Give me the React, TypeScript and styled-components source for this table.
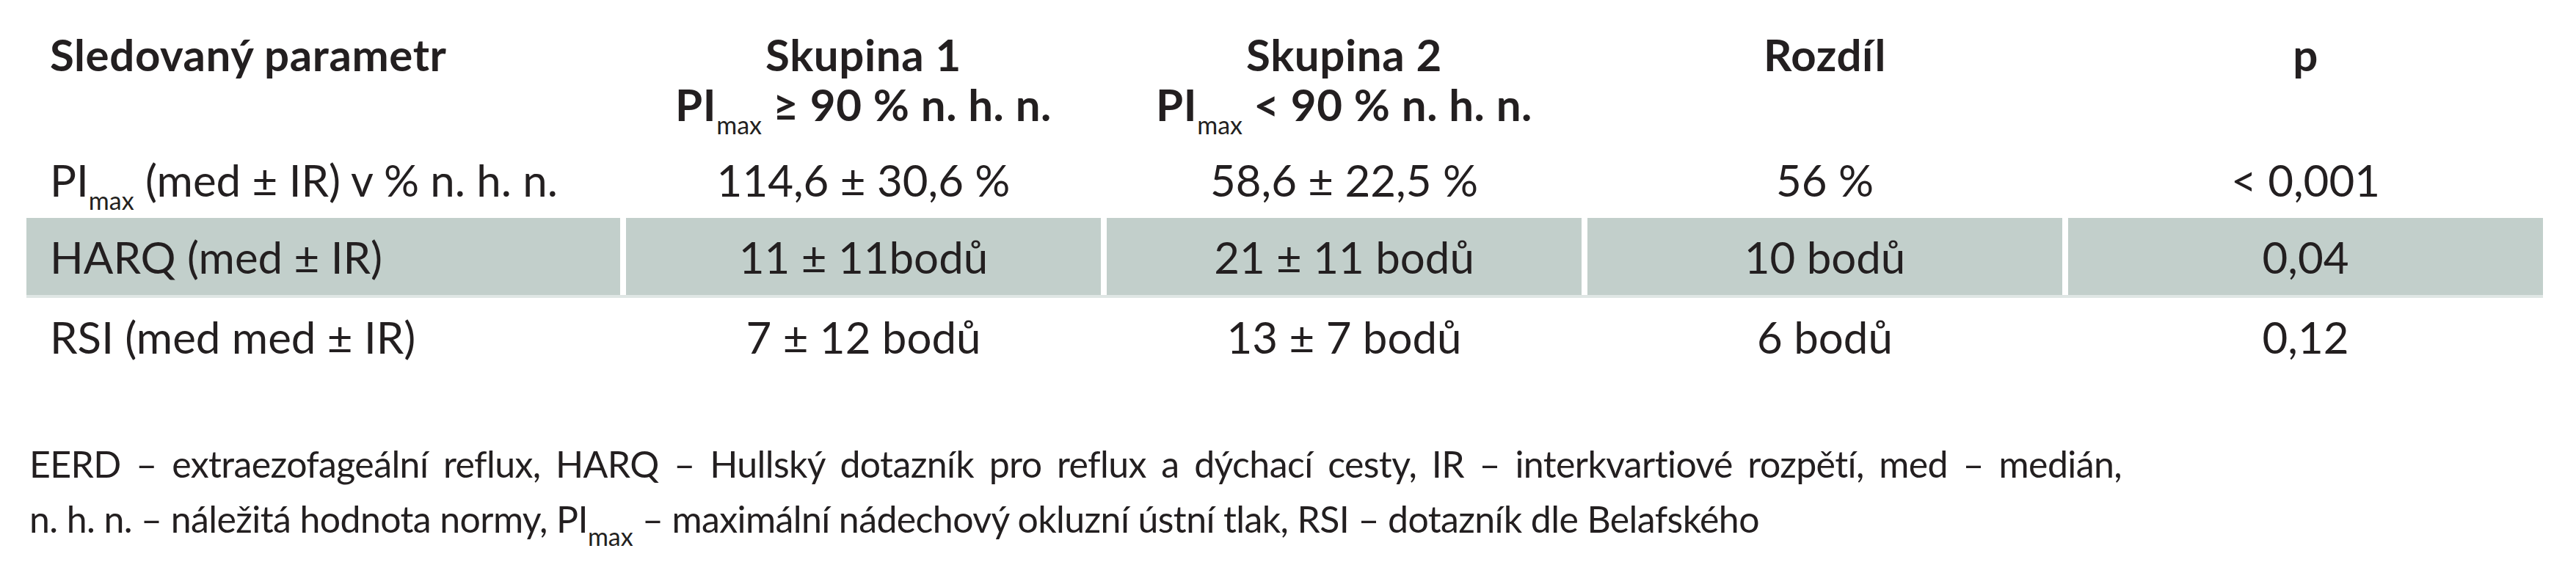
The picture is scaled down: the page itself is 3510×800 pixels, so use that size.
import styled, { createGlobalStyle } from "styled-components";

const GlobalStyle = createGlobalStyle`
  html, body {
    margin: 0;
    padding: 0;
    background: #ffffff;
  }
  body {
    font-family: Lato, "Liberation Sans", sans-serif;
    color: #231f20;
  }
`;

const Page = styled.div`
  width: 3510px;
  height: 800px;
  overflow: hidden;
  padding: 0 0 0 36px;
  box-sizing: border-box;
  background: #fff;
`;

const Table = styled.div`
  width: 3429px;
  display: flex;
  flex-direction: column;
`;

const Row = styled.div<{ $shaded?: boolean; $head?: boolean }>`
  display: grid;
  grid-template-columns: 809px repeat(4, 1fr);
  column-gap: 8px;
  height: ${(p) => (p.$head ? "192px" : "105px")};
  ${(p) => p.$shaded && "border-bottom: 4px solid #dfe6e4;"}
`;

const Cell = styled.div<{ $left?: boolean; $shaded?: boolean; $head?: boolean }>`
  display: flex;
  flex-direction: column;
  align-items: ${(p) => (p.$left ? "flex-start" : "center")};
  justify-content: ${(p) => (p.$head ? "flex-start" : "center")};
  padding-top: ${(p) => (p.$head ? "40px" : "0")};
  padding-left: ${(p) => (p.$left ? "32px" : "0")};
  font-size: 60px;
  line-height: ${(p) => (p.$head ? "68px" : "72px")};
  font-weight: ${(p) => (p.$head ? 700 : 400)};
  letter-spacing: ${(p) => (p.$head ? "0.6px" : "0")};
  background: ${(p) => (p.$shaded ? "#c2cfcb" : "transparent")};
  white-space: nowrap;
`;

const Sub = styled.sub`
  font-size: 34px;
  line-height: 0;
  vertical-align: -18px;
  font-weight: 400;
  letter-spacing: 0;
`;

const Note = styled.div`
  margin: 84px 0 0 4px;
  font-size: 50px;
  line-height: 75px;
  letter-spacing: -0.6px;
`;

const NoteLine = styled.div<{ $full?: boolean }>`
  width: ${(p) => (p.$full ? "2851px" : "auto")};
  text-align: ${(p) => (p.$full ? "justify" : "left")};
  text-align-last: ${(p) => (p.$full ? "justify" : "left")};
  white-space: ${(p) => (p.$full ? "normal" : "nowrap")};
`;

type RowData = { label: React.ReactNode; cells: string[]; shaded?: boolean };

const PI = () => (
  <>
    PI<Sub>max</Sub>
  </>
);

const rows: RowData[] = [
  {
    label: (
      <span>
        <PI /> (med ± IR) v % n. h. n.
      </span>
    ),
    cells: ["114,6 ± 30,6 %", "58,6 ± 22,5 %", "56 %", "< 0,001"],
  },
  {
    label: <span>HARQ (med ± IR)</span>,
    cells: ["11 ± 11bodů", "21 ± 11 bodů", "10 bodů", "0,04"],
    shaded: true,
  },
  {
    label: <span>RSI (med med ± IR)</span>,
    cells: ["7 ± 12 bodů", "13 ± 7 bodů", "6 bodů", "0,12"],
  },
];

export default function App() {
  return (
    <>
      <GlobalStyle />
      <Page>
        <Table>
          <Row $head>
            <Cell $head $left>
              <span>Sledovaný parametr</span>
            </Cell>
            <Cell $head>
              <span>Skupina 1</span>
              <span>
                <PI /> ≥ 90 % n. h. n.
              </span>
            </Cell>
            <Cell $head>
              <span>Skupina 2</span>
              <span>
                <PI /> &lt; 90 % n. h. n.
              </span>
            </Cell>
            <Cell $head>
              <span>Rozdíl</span>
            </Cell>
            <Cell $head>
              <span>p</span>
            </Cell>
          </Row>
          {rows.map((r, i) => (
            <Row key={i} $shaded={r.shaded}>
              <Cell $left $shaded={r.shaded}>
                {r.label}
              </Cell>
              {r.cells.map((c, j) => (
                <Cell key={j} $shaded={r.shaded}>
                  {c}
                </Cell>
              ))}
            </Row>
          ))}
        </Table>
        <Note>
          <NoteLine $full>
            EERD – extraezofageální reflux, HARQ – Hullský dotazník pro reflux a dýchací cesty, IR
            – interkvartiové rozpětí, med – medián,
          </NoteLine>
          <NoteLine>
            n. h. n. – náležitá hodnota normy, <PI /> – maximální nádechový okluzní ústní tlak, RSI
            – dotazník dle Belafského
          </NoteLine>
        </Note>
      </Page>
    </>
  );
}
